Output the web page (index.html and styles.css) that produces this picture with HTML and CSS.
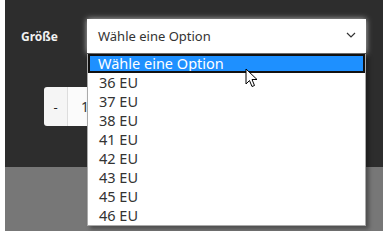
FILE: index.html
```html
<!DOCTYPE html>
<html lang="en">
<head>
    <meta charset="UTF-8">
    <meta name="viewport" content="width=device-width, initial-scale=1.0">
    <title>Größe</title>
    <link rel="stylesheet" href="styles.css">
</head>
<body>
    <div class="page">
        <div class="product">
            <div class="variant-row">
                <label class="variant-label">Größe</label>
                <div class="select-box">
                    <span>Wähle eine Option</span>
                    <svg class="chevron" width="10" height="6" viewBox="0 0 10 6"><path d="M1 1 L5 5 L9 1" fill="none" stroke="#333" stroke-width="1.2"/></svg>
                </div>
            </div>
            <div class="qty">
                <button class="qty-btn">-</button>
                <div class="qty-input">1</div>
            </div>
        </div>
        <div class="footer-band"></div>

        <ul class="dropdown">
            <li class="selected">Wähle eine Option</li>
            <li>36 EU</li>
            <li>37 EU</li>
            <li>38 EU</li>
            <li>41 EU</li>
            <li>42 EU</li>
            <li>43 EU</li>
            <li>45 EU</li>
            <li>46 EU</li>
        </ul>
        <svg class="cursor" width="14" height="22" viewBox="0 0 14 22">
            <path d="M1 1 L1 16 L4.5 12.5 L7 18.5 L9.5 17.5 L7 11.5 L12 11.5 Z" fill="#fff" stroke="#000" stroke-width="1" stroke-linejoin="round"/>
        </svg>
    </div>
</body>
</html>
```

FILE: styles.css
```css
body {
    margin: 0;
    background-color: #fff;
    font-family: "Noto Sans", "Open Sans", sans-serif;
}
.page {
    position: relative;
    width: 378px;
    margin-left: 5px;
}
.product {
    height: 167px;
    background-color: #2d2d2d;
    padding-top: 19px;
    box-sizing: border-box;
}
.variant-row {
    display: flex;
    align-items: center;
    padding-left: 16px;
}
.variant-label {
    width: 66px;
    color: #f2f2f2;
    font-weight: bold;
    font-size: 12px;
}
.select-box {
    width: 279px;
    height: 34px;
    box-sizing: border-box;
    background-color: #fff;
    display: flex;
    align-items: center;
    justify-content: space-between;
    padding: 0 10px 0 11px;
    font-size: 13px;
    color: #333;
    box-shadow: 0 0 6px rgba(255, 255, 255, 0.7);
}
.chevron {
    margin-top: -2px;
}
.qty {
    display: flex;
    margin-top: 34px;
    padding-left: 39px;
}
.qty-btn {
    width: 23px;
    height: 39px;
    border: none;
    border-radius: 3px 0 0 3px;
    background-color: #f5f5f5;
    font-family: inherit;
    font-size: 13px;
    color: #222;
    padding: 0;
}
.qty-input {
    width: 40px;
    height: 39px;
    background-color: #fbfbfb;
    border-left: 1px solid #ddd;
    padding-left: 13px;
    line-height: 39px;
    font-size: 14px;
    color: #333;
}
.footer-band {
    height: 64px;
    background-color: #777;
}
.dropdown {
    position: absolute;
    left: 82px;
    top: 54px;
    width: 279px;
    margin: 0;
    padding: 0;
    list-style: none;
    background-color: #fff;
    border: 1px solid #aaa;
    border-top: none;
    box-sizing: border-box;
    box-shadow: 3px 3px 4px rgba(0, 0, 0, 0.35);
    font-size: 14.5px;
    color: #333;
}
.dropdown li {
    height: 19px;
    line-height: 19px;
    padding-left: 11px;
}
.dropdown li.selected {
    background-color: #1e90ff;
    color: #fff;
    outline: 2px solid #111;
    outline-offset: -2px;
    padding-left: 10px;
}
.cursor {
    position: absolute;
    left: 240px;
    top: 68px;
}
```
